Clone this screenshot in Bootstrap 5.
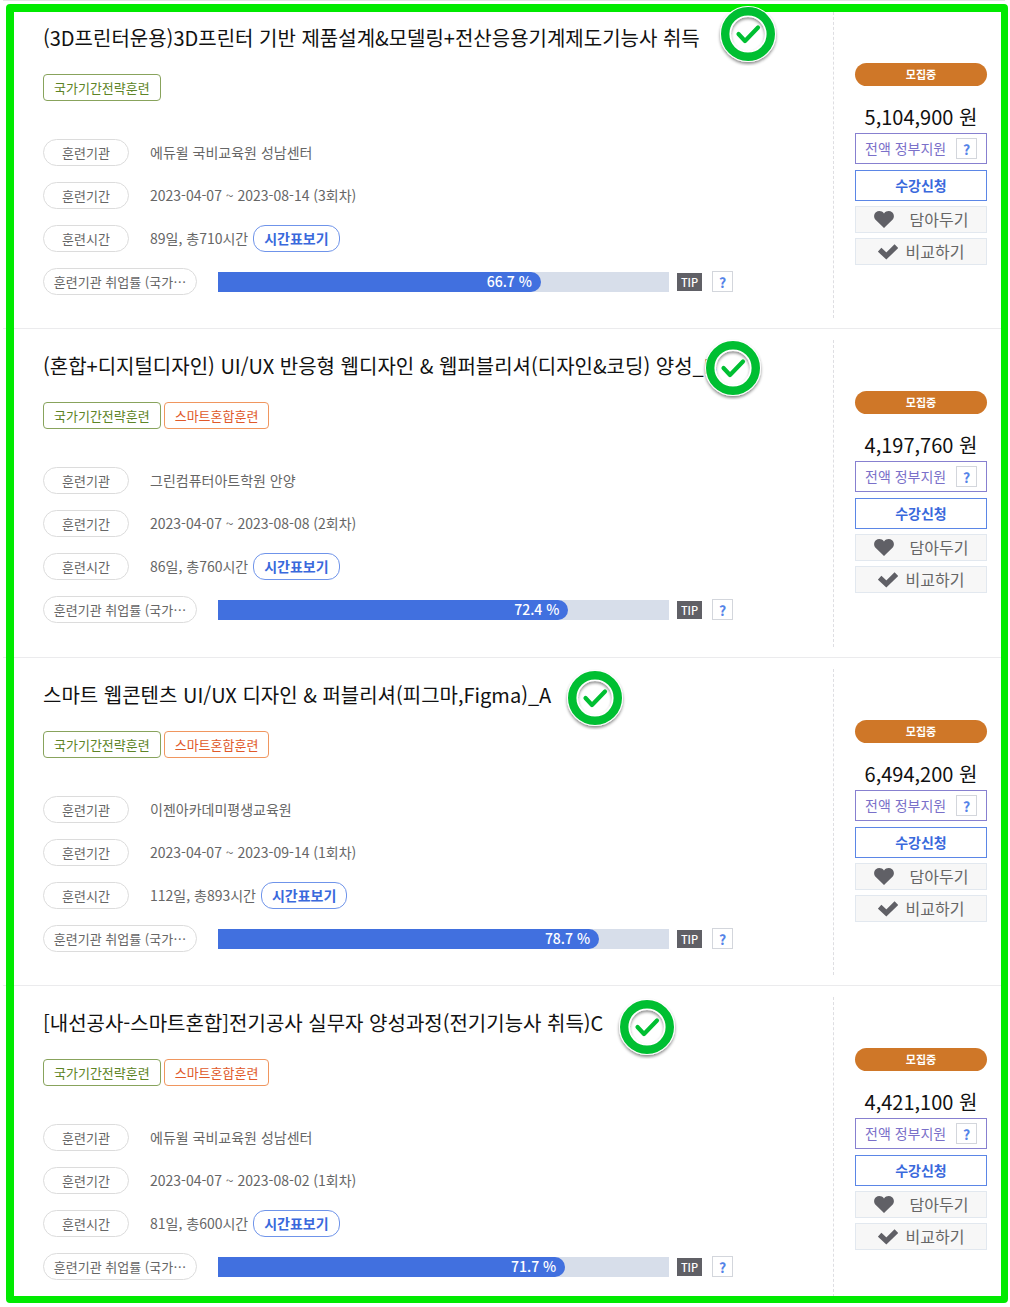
<!DOCTYPE html>
<html lang="ko">
<head>
<meta charset="utf-8">
<meta name="viewport" content="width=device-width, initial-scale=1">
<title>훈련과정 목록</title>
<link rel="stylesheet" href="https://cdn.jsdelivr.net/npm/bootstrap@5.3.0/dist/css/bootstrap.min.css">
<style>
body{font-family:"Noto Sans CJK KR","Noto Sans",sans-serif;font-size:14px;color:#666;background:#fff}
.course-list{padding:0 5px 0 3px}
.course-list ul{border-top:1px solid #e3e3e6}
.frame{inset:4px 2px 4px 6px;border:8px solid #00ea00;border-right-width:7px;border-bottom-width:7px;border-radius:4px;pointer-events:none}
.course{min-height:328px;padding:11px 0 10px;border-bottom:1px solid #ebebed}
.course:nth-child(even){min-height:329px}
.course:last-child{min-height:321px;border-bottom:0}
.course-main{padding:11px 100px 0 40px}
.course-title{font-size:20px;line-height:30px;color:#111;margin-bottom:21px;font-weight:400}
.course-title a{color:inherit;text-decoration:none}
.tags{gap:3px;margin-bottom:38px}
.tag{height:27px;line-height:25px;padding:0 10px;border:1px solid;border-radius:4px;font-size:13px}
.tag-green{color:#5d8426;border-color:#88a35c}
.tag-orange{color:#e0592a;border-color:#f0965f}
.info{gap:16px}
.pill{width:86px;height:27px;line-height:25px;border:1px solid #dcdcdc;border-radius:14px;font-size:13px;text-align:center;font-weight:400;flex:none}
.pill-wide{width:154px;margin-right:21px}
.info-value{margin-left:21px;line-height:27px;margin-bottom:0}
.btn-time{height:27px;line-height:25px;padding:0 10px;margin-left:5px;font-size:14px;font-weight:700;color:#3a69dc;border:1px solid #6f94ea;border-radius:12px;background:#fff}
.rate{height:20px;border-radius:0;background:#d7deea;font-size:14px}
.rate .progress-bar{background:#4170df;border-radius:0 10px 10px 0;text-align:right;padding-right:9px;font-weight:500}
.tip{margin-left:8px;margin-right:10px;width:25px;height:18px;line-height:18px;font-size:11px;font-weight:500;color:#fff;background:#606066;text-align:center}
.help{width:21px;height:21px;line-height:18px;font-size:14px;font-weight:700;padding:0;color:#5484e8;background:#fff;border:1px solid #d3d6dc}
.course-side{width:172px;padding:51px 18px 0 21px;flex:none;border-left:1px dashed #dedee2}
.status{height:23px;line-height:23px;border-radius:12px;background:#cf7728;color:#fff;font-size:11px;font-weight:700;text-align:center;margin-bottom:16px}
.price{font-size:20px;line-height:30px;color:#111;text-align:center;margin-bottom:1px}
.support{height:31px;border:1px solid #8780d0;color:#7a70c9;padding:0 9px;margin-bottom:6px}
.btn-apply{height:31px;line-height:29px;padding:0;border:1px solid #5b86e6;border-radius:0;color:#3a69dc;background:#fff;font-size:14px;font-weight:700;margin-bottom:5px}
.btn-gray{height:27px;line-height:25px;padding:0;margin-bottom:5px;border:1px solid #e2e8ef;border-radius:0;background:#f7f7f7;color:#666;font-size:16px}
.stamp{width:64px;height:64px;z-index:3}
.stamp-1{left:713px;top:1px}
.stamp-2{left:698px;top:7px}
.stamp-3{left:560px;top:8px}
.stamp-4{left:612px;top:9px}
</style>
<script src="https://cdn.jsdelivr.net/npm/bootstrap@5.3.0/dist/js/bootstrap.bundle.min.js"></script>
</head>
<body>
<svg width="0" height="0" class="position-absolute" aria-hidden="true">
<defs>
<filter id="drop" x="-20%" y="-20%" width="140%" height="150%"><feDropShadow dx="0" dy="2" stdDeviation="1.5" flood-color="#000" flood-opacity=".45"/></filter>
<symbol id="check-stamp" viewBox="0 0 64 64">
<circle cx="32" cy="32" r="22.500" fill="none" stroke="#fff" stroke-width="11" filter="url(#drop)"/>
<circle cx="32" cy="32" r="22.800" fill="none" stroke="#00bf32" stroke-width="8.400"/>
<path d="M22.500 32l6.500 7L42 25.500" fill="none" stroke="#00bf32" stroke-width="4.200" stroke-linecap="round" stroke-linejoin="round"/>
</symbol>
<symbol id="heart" viewBox="0 0 20 17"><path d="M10 17L1.500 8.800C-.6 6.500-.2 3 1.900 1.300 4.300-.6 8-.2 10 2.500 12-.2 15.700-.6 18.100 1.300 20.200 3 20.600 6.500 18.500 8.800Z" fill="#606066"/></symbol>
<symbol id="check" viewBox="0 0 20 16"><path d="M3.500 7.500l4.800 4.500L16.500 4" fill="none" stroke="#606066" stroke-width="5.200" stroke-linecap="square"/></symbol>
</defs>
</svg>

<main class="course-list position-relative">
<ul class="list-unstyled mb-0">

<li class="course d-flex position-relative">
<div class="course-main flex-grow-1">
<h2 class="course-title text-nowrap"><a href="#">(3D프린터운용)3D프린터 기반 제품설계&amp;모델링+전산응용기계제도기능사 취득</a></h2>
<div class="tags d-flex"><span class="tag tag-green">국가기간전략훈련</span></div>
<div class="info d-flex flex-column">
<div class="d-flex"><span class="pill">훈련기관</span><p class="info-value">에듀윌 국비교육원 성남센터</p></div>
<div class="d-flex"><span class="pill">훈련기간</span><p class="info-value">2023-04-07 ~ 2023-08-14 (3회차)</p></div>
<div class="d-flex"><span class="pill">훈련시간</span><p class="info-value">89일, 총710시간</p><button type="button" class="btn btn-time">시간표보기</button></div>
<div class="d-flex align-items-center"><span class="pill pill-wide">훈련기관 취업률 (국가⋯</span>
<div class="progress rate flex-grow-1" role="progressbar" aria-label="취업률" aria-valuenow="66.7" aria-valuemin="0" aria-valuemax="100"><div class="progress-bar" style="width:71.6%">66.7 %</div></div>
<span class="tip">TIP</span><button type="button" class="help">?</button></div>
</div>
</div>
<div class="course-side d-flex flex-column">
<div class="status">모집중</div>
<div class="price">5,104,900 원</div>
<div class="support d-flex align-items-center justify-content-between"><span>전액 정부지원</span><button type="button" class="help">?</button></div>
<button type="button" class="btn btn-apply">수강신청</button>
<button type="button" class="btn btn-gray d-flex align-items-center justify-content-center"><svg width="20" height="17" class="me-3"><use href="#heart"/></svg>담아두기</button>
<button type="button" class="btn btn-gray d-flex align-items-center justify-content-center"><svg width="20" height="16" class="me-2"><use href="#check"/></svg>비교하기</button>
</div>
<svg class="stamp stamp-1 position-absolute" aria-hidden="true"><use href="#check-stamp"/></svg>
</li>

<li class="course d-flex position-relative">
<div class="course-main flex-grow-1">
<h2 class="course-title text-nowrap"><a href="#">(혼합+디지털디자인) UI/UX 반응형 웹디자인 &amp; 웹퍼블리셔(디자인&amp;코딩) 양성_B</a></h2>
<div class="tags d-flex"><span class="tag tag-green">국가기간전략훈련</span><span class="tag tag-orange">스마트혼합훈련</span></div>
<div class="info d-flex flex-column">
<div class="d-flex"><span class="pill">훈련기관</span><p class="info-value">그린컴퓨터아트학원 안양</p></div>
<div class="d-flex"><span class="pill">훈련기간</span><p class="info-value">2023-04-07 ~ 2023-08-08 (2회차)</p></div>
<div class="d-flex"><span class="pill">훈련시간</span><p class="info-value">86일, 총760시간</p><button type="button" class="btn btn-time">시간표보기</button></div>
<div class="d-flex align-items-center"><span class="pill pill-wide">훈련기관 취업률 (국가⋯</span>
<div class="progress rate flex-grow-1" role="progressbar" aria-label="취업률" aria-valuenow="72.4" aria-valuemin="0" aria-valuemax="100"><div class="progress-bar" style="width:77.7%">72.4 %</div></div>
<span class="tip">TIP</span><button type="button" class="help">?</button></div>
</div>
</div>
<div class="course-side d-flex flex-column">
<div class="status">모집중</div>
<div class="price">4,197,760 원</div>
<div class="support d-flex align-items-center justify-content-between"><span>전액 정부지원</span><button type="button" class="help">?</button></div>
<button type="button" class="btn btn-apply">수강신청</button>
<button type="button" class="btn btn-gray d-flex align-items-center justify-content-center"><svg width="20" height="17" class="me-3"><use href="#heart"/></svg>담아두기</button>
<button type="button" class="btn btn-gray d-flex align-items-center justify-content-center"><svg width="20" height="16" class="me-2"><use href="#check"/></svg>비교하기</button>
</div>
<svg class="stamp stamp-2 position-absolute" aria-hidden="true"><use href="#check-stamp"/></svg>
</li>

<li class="course d-flex position-relative">
<div class="course-main flex-grow-1">
<h2 class="course-title text-nowrap"><a href="#">스마트 웹콘텐츠 UI/UX 디자인 &amp; 퍼블리셔(피그마,Figma)_A</a></h2>
<div class="tags d-flex"><span class="tag tag-green">국가기간전략훈련</span><span class="tag tag-orange">스마트혼합훈련</span></div>
<div class="info d-flex flex-column">
<div class="d-flex"><span class="pill">훈련기관</span><p class="info-value">이젠아카데미평생교육원</p></div>
<div class="d-flex"><span class="pill">훈련기간</span><p class="info-value">2023-04-07 ~ 2023-09-14 (1회차)</p></div>
<div class="d-flex"><span class="pill">훈련시간</span><p class="info-value">112일, 총893시간</p><button type="button" class="btn btn-time">시간표보기</button></div>
<div class="d-flex align-items-center"><span class="pill pill-wide">훈련기관 취업률 (국가⋯</span>
<div class="progress rate flex-grow-1" role="progressbar" aria-label="취업률" aria-valuenow="78.7" aria-valuemin="0" aria-valuemax="100"><div class="progress-bar" style="width:84.5%">78.7 %</div></div>
<span class="tip">TIP</span><button type="button" class="help">?</button></div>
</div>
</div>
<div class="course-side d-flex flex-column">
<div class="status">모집중</div>
<div class="price">6,494,200 원</div>
<div class="support d-flex align-items-center justify-content-between"><span>전액 정부지원</span><button type="button" class="help">?</button></div>
<button type="button" class="btn btn-apply">수강신청</button>
<button type="button" class="btn btn-gray d-flex align-items-center justify-content-center"><svg width="20" height="17" class="me-3"><use href="#heart"/></svg>담아두기</button>
<button type="button" class="btn btn-gray d-flex align-items-center justify-content-center"><svg width="20" height="16" class="me-2"><use href="#check"/></svg>비교하기</button>
</div>
<svg class="stamp stamp-3 position-absolute" aria-hidden="true"><use href="#check-stamp"/></svg>
</li>

<li class="course d-flex position-relative">
<div class="course-main flex-grow-1">
<h2 class="course-title text-nowrap"><a href="#">[내선공사-스마트혼합]전기공사 실무자 양성과정(전기기능사 취득)C</a></h2>
<div class="tags d-flex"><span class="tag tag-green">국가기간전략훈련</span><span class="tag tag-orange">스마트혼합훈련</span></div>
<div class="info d-flex flex-column">
<div class="d-flex"><span class="pill">훈련기관</span><p class="info-value">에듀윌 국비교육원 성남센터</p></div>
<div class="d-flex"><span class="pill">훈련기간</span><p class="info-value">2023-04-07 ~ 2023-08-02 (1회차)</p></div>
<div class="d-flex"><span class="pill">훈련시간</span><p class="info-value">81일, 총600시간</p><button type="button" class="btn btn-time">시간표보기</button></div>
<div class="d-flex align-items-center"><span class="pill pill-wide">훈련기관 취업률 (국가⋯</span>
<div class="progress rate flex-grow-1" role="progressbar" aria-label="취업률" aria-valuenow="71.7" aria-valuemin="0" aria-valuemax="100"><div class="progress-bar" style="width:77%">71.7 %</div></div>
<span class="tip">TIP</span><button type="button" class="help">?</button></div>
</div>
</div>
<div class="course-side d-flex flex-column">
<div class="status">모집중</div>
<div class="price">4,421,100 원</div>
<div class="support d-flex align-items-center justify-content-between"><span>전액 정부지원</span><button type="button" class="help">?</button></div>
<button type="button" class="btn btn-apply">수강신청</button>
<button type="button" class="btn btn-gray d-flex align-items-center justify-content-center"><svg width="20" height="17" class="me-3"><use href="#heart"/></svg>담아두기</button>
<button type="button" class="btn btn-gray d-flex align-items-center justify-content-center"><svg width="20" height="16" class="me-2"><use href="#check"/></svg>비교하기</button>
</div>
<svg class="stamp stamp-4 position-absolute" aria-hidden="true"><use href="#check-stamp"/></svg>
</li>
</ul>
<div class="frame position-absolute" aria-hidden="true"></div>
</main>
</body>
</html>
